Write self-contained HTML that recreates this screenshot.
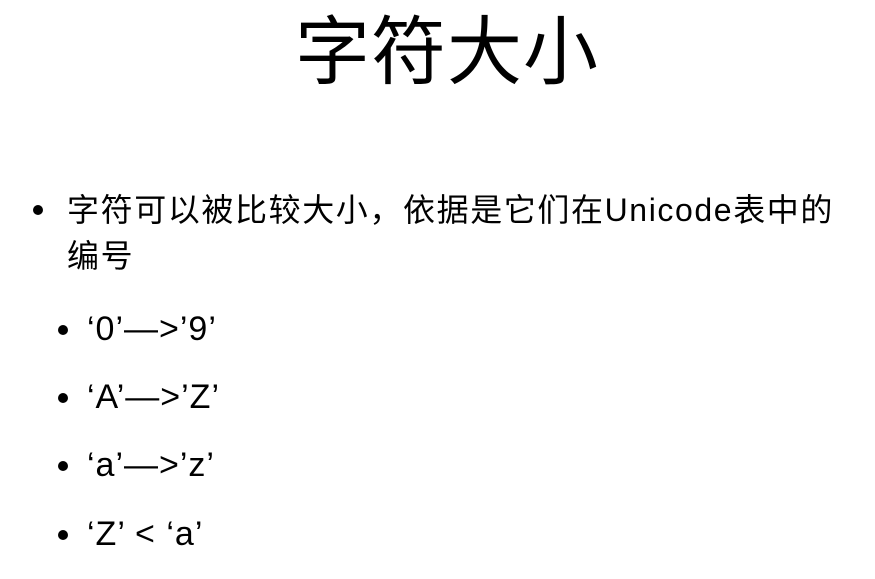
<!DOCTYPE html>
<html><head><meta charset="utf-8"><style>
body{margin:0;width:875px;height:579px;background:#fff;position:relative;overflow:hidden;font-family:"Liberation Sans","Noto Sans CJK SC",sans-serif;color:#000}
.a{position:absolute;white-space:nowrap;line-height:1}
.dot{position:absolute;width:10px;height:10px;border-radius:50%;background:#000}
.s{font-size:34px;letter-spacing:1px}
</style></head><body>
<div class="a" style="left:295px;top:15px;font-size:75px;letter-spacing:1px">字符大小</div>
<div class="dot" style="left:33px;top:205px"></div>
<div class="a" style="left:67px;top:194px;font-size:32px;letter-spacing:1.6px">字符可以被比较大小，依据是它们在Unicode表中的</div>
<div class="a" style="left:67px;top:240px;font-size:32px;letter-spacing:1.6px">编号</div>
<div class="dot" style="left:58px;top:325px"></div>
<div class="a s" style="left:87px;top:312px">‘0’—&gt;’9’</div>
<div class="dot" style="left:58px;top:393px"></div>
<div class="a s" style="left:87px;top:380px">‘A’—&gt;’Z’</div>
<div class="dot" style="left:58px;top:461px"></div>
<div class="a s" style="left:87px;top:448px">‘a’—&gt;’z’</div>
<div class="dot" style="left:58px;top:530px"></div>
<div class="a s" style="left:87px;top:517px">‘Z’ &lt; ‘a’</div>
</body></html>
